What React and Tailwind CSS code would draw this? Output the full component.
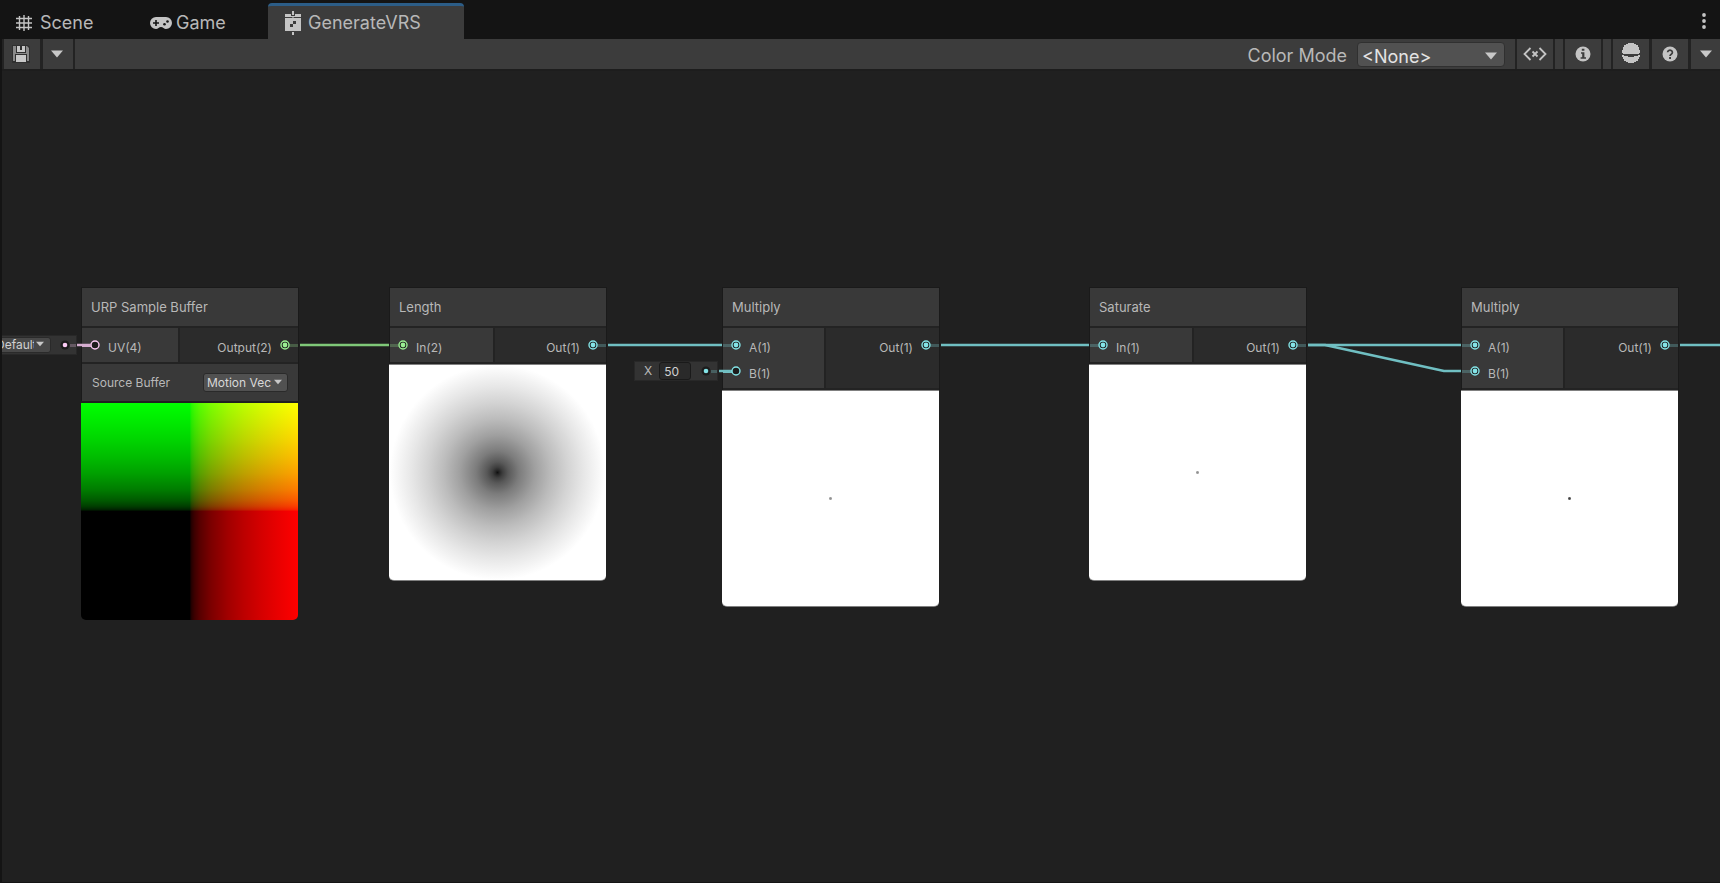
const CYAN = "#84e4e7";
const GREEN = "#9aef92";
const PINK = "#fbcbf4";

const NODES = [
  {
    title: "URP Sample Buffer",
    left: 79,
    inputWidth: 96,
    inputs: [{ label: "UV(4)", color: PINK, open: true }],
    outputs: [{ label: "Output(2)", color: GREEN }],
    control: true,
    preview: "motion",
  },
  {
    title: "Length",
    left: 387,
    inputWidth: 103,
    inputs: [{ label: "In(2)", color: GREEN }],
    outputs: [{ label: "Out(1)", color: CYAN }],
    preview: "radial",
  },
  {
    title: "Multiply",
    left: 720,
    inputWidth: 101,
    inputs: [
      { label: "A(1)", color: CYAN },
      { label: "B(1)", color: CYAN, open: true },
    ],
    outputs: [{ label: "Out(1)", color: CYAN }],
    preview: "faintDot",
  },
  {
    title: "Saturate",
    left: 1087,
    inputWidth: 102,
    inputs: [{ label: "In(1)", color: CYAN }],
    outputs: [{ label: "Out(1)", color: CYAN }],
    preview: "faintDot",
  },
  {
    title: "Multiply",
    left: 1459,
    inputWidth: 101,
    inputs: [
      { label: "A(1)", color: CYAN },
      { label: "B(1)", color: CYAN },
    ],
    outputs: [{ label: "Out(1)", color: CYAN }],
    preview: "darkDot",
  },
];

const WIRES = [
  { points: "75,276 89,276", color: "#d6aed0" },
  { points: "298,276 387,276", color: "#7fc878" },
  { points: "606,276 720,276", color: "#70bfc2" },
  { points: "717,302 729,302", color: "#70bfc2" },
  { points: "939,276 1087,276", color: "#70bfc2" },
  { points: "1306,276 1459,276", color: "#70bfc2" },
  { points: "1306,276 1323,276 1442,302 1459,302", color: "#70bfc2" },
  { points: "1678,276 4000,276", color: "#70bfc2" },
];

const PREVIEWS = {
  motion:
    "bg-[linear-gradient(to_top,#000_50%,#002700_51%,#003f00_52.5%,#005900_55%,#007c00_60%,#00a000_67.5%,#00bc00_75%,#00d300_82.5%,#00e700_90%,#00ff00_100%),linear-gradient(to_right,#000_50%,#270000_51%,#3f0000_52.5%,#590000_55%,#7c0000_60%,#a00000_67.5%,#bc0000_75%,#d30000_82.5%,#e70000_90%,#ff0000_100%)] bg-blend-screen",
  radial:
    "border-y border-[#808080] bg-[radial-gradient(circle_closest-side,#101010_0%,#272727_2%,#3f3f3f_5%,#595959_10%,#7c7c7c_20%,#a0a0a0_35%,#bcbcbc_50%,#d3d3d3_65%,#e7e7e7_80%,#fff_100%)]",
  faintDot:
    "border-y border-[#808080] bg-[radial-gradient(circle,#909090_0px,#a0a0a0_1px,#fff_2px)]",
  darkDot:
    "border-y border-[#808080] bg-[radial-gradient(circle,#404040_0px,#606060_1px,#fff_2px)]",
};

function Caret({ className }) {
  return (
    <svg viewBox="0 0 12 8" className={className} aria-hidden="true">
      <path d="M0 0.5h12L6 7.5z" fill="#c8c8c8" />
    </svg>
  );
}

function PortDot({ color, open }) {
  return (
    <svg viewBox="0 0 10 10" className="relative size-[10px] shrink-0" aria-hidden="true">
      <circle cx="5" cy="5" r="4" fill="#1c1c1c" stroke={color} strokeWidth="1.4" />
      {!open && <circle cx="5" cy="5" r="2.4" fill={color} />}
    </svg>
  );
}

function Port({ port, output }) {
  return (
    <div
      className={
        "relative flex h-[26px] items-center gap-2 px-2 " + (output ? "flex-row-reverse" : "")
      }
    >
      <span
        className={
          "absolute top-3 h-[3px] w-3 " +
          (output ? "right-0 " : "left-0 ") +
          (port.open ? "opacity-80" : "opacity-25")
        }
        style={{ backgroundColor: port.color }}
      />
      <PortDot color={port.color} open={port.open} />
      <span className="pt-1.5 text-xs leading-4">{port.label}</span>
    </div>
  );
}

function Node({ node }) {
  return (
    <section className="absolute top-[218px] w-[218px]" style={{ left: node.left }}>
      <div className="border-x border-t border-[#1a1a1a] bg-[#232323]">
        <h2 className="flex h-[38px] items-center bg-[#393939] px-[9px] pt-0.5 text-[13px]">
          {node.title}
        </h2>
        <div className="flex gap-0.5 py-0.5">
          <div className="shrink-0 bg-[#393939] py-1" style={{ width: node.inputWidth }}>
            {node.inputs.map((port) => (
              <Port key={port.label} port={port} />
            ))}
          </div>
          <div className="flex-1 bg-[#2b2b2b] py-1">
            {node.outputs.map((port) => (
              <Port key={port.label} port={port} output />
            ))}
          </div>
        </div>
        {node.control && (
          <div className="mb-0.5 flex h-[37px] items-center justify-between bg-[#393939] px-2.5">
            <label htmlFor="source-buffer" className="text-xs">
              Source Buffer
            </label>
            <div className="relative">
              <select
                id="source-buffer"
                className="block h-[19px] w-[85px] appearance-none rounded-[3px] border border-[#2a2a2a] bg-[#515151] pr-4 pl-[3px] text-xs leading-4 text-[#d8d8d8]"
              >
                <option>Motion Vectors</option>
              </select>
              <Caret className="pointer-events-none absolute top-1.5 right-1.5 h-[6px] w-2" />
            </div>
          </div>
        )}
      </div>
      <div className={"mr-px h-[217px] rounded-b-[5px] " + PREVIEWS[node.preview]} />
    </section>
  );
}

function SlotDot({ color }) {
  return (
    <svg viewBox="0 0 10 10" className="relative size-[10px]" aria-hidden="true">
      <circle cx="5" cy="5" r="4.5" fill="#1c1c1c" />
      <circle cx="5" cy="5" r="2.3" fill={color} />
    </svg>
  );
}

function ToolButton({ label, className, children }) {
  return (
    <button
      type="button"
      aria-label={label}
      className={"flex items-center justify-center bg-[#3c3c3c] " + className}
    >
      {children}
    </button>
  );
}

export default function App() {
  return (
    <div className="flex min-h-screen flex-col overflow-hidden bg-[#141414] font-['Inter',sans-serif] text-[#b8b8b8]">
      <header className="flex h-[39px] shrink-0 items-end justify-between pr-2.5">
        <nav className="flex items-end" aria-label="Tabs">
          <button
            type="button"
            className="flex h-9 w-[134px] items-center gap-2 border-t-[3px] border-transparent pt-px pl-4 text-lg"
          >
            <svg viewBox="0 0 16 16" className="size-4" fill="none" stroke="#c4c4c4" strokeWidth="1.4" aria-hidden="true">
              <path d="M3.5 1v14M8 0v16M12.5 1v14M0 3.5h16M0 8h16M0 12.5h16" />
            </svg>
            Scene
          </button>
          <button
            type="button"
            className="flex h-9 w-[134px] items-center gap-1 border-t-[3px] border-transparent pt-px pl-4 text-lg"
          >
            <svg viewBox="0 0 22 12" className="h-3 w-[22px]" aria-hidden="true">
              <path
                d="M6 0h10a6 6 0 0 1 0 12c-2 0-3-2-5-2s-3 2-5 2A6 6 0 0 1 6 0z"
                fill="#c4c4c4"
              />
              <path d="M6 3v6M3 6h6" stroke="#141414" strokeWidth="1.6" />
              <circle cx="14.5" cy="7.3" r="1.3" fill="#141414" />
              <circle cx="17.5" cy="4.5" r="1.3" fill="#141414" />
            </svg>
            Game
          </button>
          <button
            type="button"
            className="flex h-9 w-[196px] items-center gap-1.5 rounded-t border-t-[3px] border-[#2c5d87] bg-[#3c3c3c] pt-px pl-4 text-lg"
          >
            <svg viewBox="0 0 18 24" className="h-6 w-[18px]" aria-hidden="true">
              <path d="M8 0h2v24H8z" fill="#c4c4c4" />
              <path d="M7 1.5h4v5H7zM7 20h4v1H7z" fill="#3c3c3c" />
              <path d="M8 0h2v4H8z" fill="#c4c4c4" />
              <path d="M1 3h6v2h4V3h6v3H1zM1 7h16v13H1z" fill="#c4c4c4" />
              <path d="M6 13h3v3H6zM9 10h3v3H9z" fill="#3c3c3c" />
            </svg>
            GenerateVRS
          </button>
        </nav>
        <button type="button" aria-label="More" className="flex h-9 w-3 items-center justify-center">
          <svg viewBox="0 0 4 16" className="h-4 w-1" fill="#c4c4c4" aria-hidden="true">
            <circle cx="2" cy="2" r="1.9" />
            <circle cx="2" cy="8" r="1.9" />
            <circle cx="2" cy="14" r="1.9" />
          </svg>
        </button>
      </header>

      <div className="ml-0.5 flex h-[30px] shrink-0 justify-between bg-[#232323] pl-0.5">
        <div className="flex gap-[3px]">
          <ToolButton label="Save" className="w-9 pr-0.5">
            <svg viewBox="0 0 18 18" className="size-[18px]" aria-hidden="true">
              <path d="M0 0h16l2 2v16H0z" fill="#303030" />
              <path d="M1 1h14l2 2v13H1z" fill="#8a8a8a" />
              <path d="M4 0h10v8H4zM3 9h12v9H3z" fill="#303030" />
              <path d="M5 1h8v6H5zM4 10h10v7H4z" fill="#c8c8c8" />
              <path d="M8 1h2v4H8z" fill="#303030" />
            </svg>
          </ToolButton>
          <ToolButton label="Save options" className="w-[30px] pr-0.5">
            <Caret className="h-2 w-3" />
          </ToolButton>
        </div>
        <div className="ml-0.5 flex flex-1 items-center justify-end gap-2.5 bg-[#3c3c3c] pr-2.5">
          <label htmlFor="color-mode" className="pt-1 text-lg">
            Color Mode
          </label>
          <div className="relative">
            <select
              id="color-mode"
              className="block h-[25px] w-[148px] appearance-none rounded border border-[#303030] bg-[#515151] pt-1 pl-1 text-lg leading-5 text-[#e4e4e4]"
            >
              <option>&lt;None&gt;</option>
            </select>
            <Caret className="pointer-events-none absolute top-2.5 right-2 h-2 w-3" />
          </div>
        </div>
        <div className="ml-0.5 flex gap-0.5">
          <ToolButton label="Variant viewer" className="w-9">
            <svg viewBox="0 0 24 14" className="h-3.5 w-6" fill="none" stroke="#c4c4c4" strokeWidth="1.8" aria-hidden="true">
              <path d="M7.5 1L1.5 7l6 6M16.5 1l6 6-6 6M9.5 4.5l5 5M14.5 4.5l-5 5" />
            </svg>
          </ToolButton>
          <div className="w-2 bg-[#3c3c3c]" />
          <ToolButton label="Inspector" className="w-9">
            <svg viewBox="0 0 16 16" className="size-4" aria-hidden="true">
              <circle cx="8" cy="8" r="7.5" fill="#c4c4c4" />
              <path d="M6.8 2.8h2.6v2H6.8zM6 6.2h3.4v5H11v1.5H5.6v-1.5h1.6V7.7H6z" fill="#3c3c3c" />
            </svg>
          </ToolButton>
          <div className="w-2 bg-[#3c3c3c]" />
          <ToolButton label="Main preview" className="w-9 pb-0.5">
            <svg viewBox="0 0 20 20" className="size-5" fill="#c4c4c4" aria-hidden="true">
              <path d="M7 0h6v1h2v1h2v2h1v3h1v3h-1v1H2v-1H1V7h1V4h1V2h2V1h2z" />
              <path d="M1 12h2v1h4v1h6v-1h4v-1h2v2h-1v2h-1v2h-2v1h-2v1H7v-1H5v-1H3v-2H2v-2H1z" />
            </svg>
          </ToolButton>
          <ToolButton label="Help" className="ml-px w-9">
            <svg viewBox="0 0 16 16" className="size-4" aria-hidden="true">
              <circle cx="8" cy="8" r="7.5" fill="#c4c4c4" />
              <path d="M5.6 6.3a2.4 2.2 0 1 1 3.7 1.9c-.9.6-1.3.9-1.3 1.8" fill="none" stroke="#3c3c3c" strokeWidth="1.7" />
              <path d="M7.1 11h1.9v1.9H7.1z" fill="#3c3c3c" />
            </svg>
          </ToolButton>
          <ToolButton label="Help options" className="ml-px w-[29px]">
            <Caret className="h-2 w-3" />
          </ToolButton>
        </div>
      </div>

      <main className="relative mb-px ml-0.5 min-h-[600px] flex-1 overflow-hidden border-t-2 border-[#1d1d1d] bg-[#202020]">
        <div className="absolute inset-x-0 -top-0.5 bottom-0">
          {NODES.map((node) => (
            <Node key={node.left} node={node} />
          ))}

          <div className="absolute top-[266px] -left-3 flex h-5 w-[87px] items-center justify-between border border-[#282828] bg-[#333333] pr-1.5">
            <div className="relative">
              <select
                aria-label="UV channel"
                className="block h-4 w-[60px] appearance-none rounded-[3px] border border-[#2a2a2a] bg-[#484848] pr-4 pl-1 text-xs leading-3 text-[#d0d0d0]"
              >
                <option>Default</option>
              </select>
              <Caret className="pointer-events-none absolute top-1 right-[7px] h-1.5 w-2" />
            </div>
            <SlotDot color={PINK} />
            <span className="absolute right-0 h-[3px] w-1.5 bg-[#fbcbf4]/25" />
          </div>

          <div className="absolute top-[292px] left-[632px] flex h-5 w-[84px] items-center border border-[#282828] bg-[#333333] pr-1.5 pl-[9px] text-xs">
            <label htmlFor="slot-x">X</label>
            <input
              id="slot-x"
              defaultValue="50"
              className="ml-[7px] h-[18px] w-8 rounded-[3px] border border-[#1a1a1a] bg-[#2a2a2a] px-1 text-xs text-[#d0d0d0]"
            />
            <span className="flex-1" />
            <SlotDot color={CYAN} />
            <span className="absolute right-0 h-[3px] w-1.5 bg-[#84e4e7]/25" />
          </div>

          <svg className="pointer-events-none absolute inset-0 size-full" fill="none" aria-hidden="true">
            {WIRES.map((wire) => (
              <polyline
                key={wire.points}
                points={wire.points}
                stroke={wire.color}
                strokeWidth="2.5"
                strokeLinejoin="round"
              />
            ))}
          </svg>
        </div>
      </main>
    </div>
  );
}
